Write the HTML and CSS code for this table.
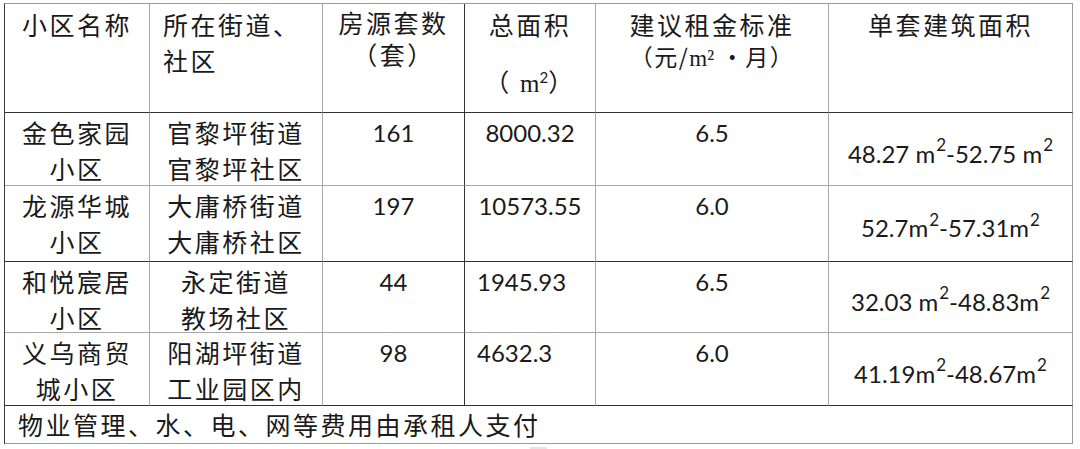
FILE: index.html
```html
<!DOCTYPE html>
<html lang="zh">
<head>
<meta charset="utf-8">
<link rel="stylesheet" href="styles.css">
</head>
<body>
<div class="grid">
  <div class="cell hd cn c">小区名称</div>
  <div class="cell hd cn l">所在街道、<br>社区</div>
  <div class="cell hd cn c tight dkr">房源套数<br>（套）</div>
  <div class="cell hd cn c">总面积<div class="unit">（ <span class="serif">m</span><span class="sup">2</span>）</div></div>
  <div class="cell hd cn c">建议租金标准<div class="unit2">（元/<span class="serif">m²</span> •月）</div></div>
  <div class="cell hd cn c last">单套建筑面积</div>

  <div class="cell cn c">金色家园<br>小区</div>
  <div class="cell cn c">官黎坪街道<br>官黎坪社区</div>
  <div class="cell num c dkr">161</div>
  <div class="cell num c">8000.32</div>
  <div class="cell num c">6.5</div>
  <div class="cell area last">48.27 m<span class="sq">2</span>-52.75 m<span class="sq">2</span></div>

  <div class="cell cn c dkb">龙源华城<br>小区</div>
  <div class="cell cn c dkb">大庸桥街道<br>大庸桥社区</div>
  <div class="cell num c dkr dkb">197</div>
  <div class="cell num c dkb">10573.55</div>
  <div class="cell num c dkb">6.0</div>
  <div class="cell area last dkb">52.7m<span class="sq">2</span>-57.31m<span class="sq">2</span></div>

  <div class="cell cn c">和悦宸居<br>小区</div>
  <div class="cell cn c">永定街道<br>教场社区</div>
  <div class="cell num c dkr">44</div>
  <div class="cell num l">1945.93</div>
  <div class="cell num c">6.5</div>
  <div class="cell area last">32.03 m<span class="sq">2</span>-48.83m<span class="sq">2</span></div>

  <div class="cell cn c dkb">义乌商贸<br>城小区</div>
  <div class="cell cn c dkb">阳湖坪街道<br>工业园区内</div>
  <div class="cell num c dkr dkb">98</div>
  <div class="cell num l dkb">4632.3</div>
  <div class="cell num c dkb">6.0</div>
  <div class="cell area last dkb">41.19m<span class="sq">2</span>-48.67m<span class="sq">2</span></div>

  <div class="cell cn note last">物业管理、水、电、网等费用由承租人支付</div>
</div>
<div class="scrap"></div>
</body>
</html>
```

FILE: styles.css
```css
html, body {
  margin: 0;
  padding: 0;
  background: #fff;
}
body {
  width: 1080px;
  height: 449px;
  overflow: hidden;
  color: #1a1a1a;
}
.grid {
  margin: 3px 0 0 4px;
  width: 1069px;
  display: grid;
  grid-template-columns: 145px 173px 142px 131px 233px 244px;
  grid-template-rows: 109px 73px 76px 71px 73px 38px;
  border-top: 1px solid #9a9a9a;
  border-left: 1px solid #3c3c3c;
  box-sizing: border-box;
}
.cell {
  box-sizing: border-box;
  border-right: 1px solid #a8a8a8;
  border-bottom: 1px solid #a8a8a8;
  min-width: 0;
}
.cell.last { border-right-color: #9a9a9a; }
.cell.dkr { border-right-color: #333; }
.cell.hd, .cell.dkb { border-bottom-color: #333; }

.cn {
  font-family: "Noto Sans CJK SC", "Noto Sans", sans-serif;
  font-size: 25px;
  letter-spacing: 2.5px;
  line-height: 36px;
  padding-top: 1px;
}
.hd.cn { padding-top: 2px; }
.tight { line-height: 32px; }
.c { text-align: center; }
.l { text-align: left; padding-left: 13px; }
.num.l { padding-left: 12px; }

.unit { margin-top: 21px; }
.unit2 {
  font-size: 23px;
  letter-spacing: 1.5px;
  line-height: 28px;
  margin-top: 0;
}
.serif {
  font-family: "Liberation Serif", serif;
  letter-spacing: 0;
}
.sup {
  font-family: "Lato", sans-serif;
  font-size: 15px;
  position: relative;
  top: -9px;
  letter-spacing: 0;
}

.num {
  font-family: "Lato", "Noto Sans", sans-serif;
  font-size: 24px;
  line-height: 36px;
  padding-top: 2px;
}
.area {
  font-family: "Lato", "Noto Sans", sans-serif;
  font-size: 24px;
  display: flex;
  align-items: center;
  justify-content: center;
  padding-top: 8px;
  white-space: nowrap;
}
.sq {
  font-size: 17px;
  position: relative;
  top: -8px;
  line-height: 0;
  margin-left: 1px;
}
.note {
  grid-column: 1 / span 6;
  text-align: left;
  padding: 0 0 0 13px;
  line-height: 36px;
  border-bottom-color: #9a9a9a;
}
.scrap {
  margin: 3px 0 0 530px;
  width: 17px;
  height: 4px;
  background: #e4e4e4;
}
```
